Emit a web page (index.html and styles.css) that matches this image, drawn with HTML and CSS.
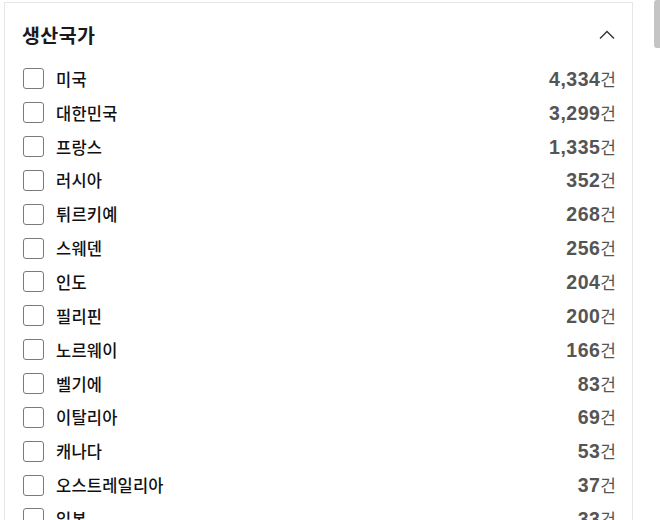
FILE: index.html
```html
<!DOCTYPE html>
<html lang="ko">
<head>
    <meta charset="UTF-8">
    <meta name="viewport" content="width=device-width, initial-scale=1.0">
    <title>생산국가 필터</title>
    <link rel="stylesheet" href="styles.css">
</head>
<body>

    <div class="filter-panel">
        <div class="filter-header">
            <h2>생산국가</h2>
            <svg class="chevron" width="16" height="10" viewBox="0 0 16 10">
                <polyline points="1,8.5 8,1.5 15,8.5" fill="none" stroke="#333" stroke-width="1.4"/>
            </svg>
        </div>

        <ul class="filter-list">
            <li class="filter-item"><label><input type="checkbox"><span class="name">미국</span></label><span class="count"><b>4,334</b>건</span></li>
            <li class="filter-item"><label><input type="checkbox"><span class="name">대한민국</span></label><span class="count"><b>3,299</b>건</span></li>
            <li class="filter-item"><label><input type="checkbox"><span class="name">프랑스</span></label><span class="count"><b>1,335</b>건</span></li>
            <li class="filter-item"><label><input type="checkbox"><span class="name">러시아</span></label><span class="count"><b>352</b>건</span></li>
            <li class="filter-item"><label><input type="checkbox"><span class="name">튀르키예</span></label><span class="count"><b>268</b>건</span></li>
            <li class="filter-item"><label><input type="checkbox"><span class="name">스웨덴</span></label><span class="count"><b>256</b>건</span></li>
            <li class="filter-item"><label><input type="checkbox"><span class="name">인도</span></label><span class="count"><b>204</b>건</span></li>
            <li class="filter-item"><label><input type="checkbox"><span class="name">필리핀</span></label><span class="count"><b>200</b>건</span></li>
            <li class="filter-item"><label><input type="checkbox"><span class="name">노르웨이</span></label><span class="count"><b>166</b>건</span></li>
            <li class="filter-item"><label><input type="checkbox"><span class="name">벨기에</span></label><span class="count"><b>83</b>건</span></li>
            <li class="filter-item"><label><input type="checkbox"><span class="name">이탈리아</span></label><span class="count"><b>69</b>건</span></li>
            <li class="filter-item"><label><input type="checkbox"><span class="name">캐나다</span></label><span class="count"><b>53</b>건</span></li>
            <li class="filter-item"><label><input type="checkbox"><span class="name">오스트레일리아</span></label><span class="count"><b>37</b>건</span></li>
            <li class="filter-item"><label><input type="checkbox"><span class="name">일본</span></label><span class="count"><b>33</b>건</span></li>
        </ul>
    </div>

    <div class="scroll-thumb"></div>

</body>
</html>
```

FILE: styles.css
```css
html, body {
    height: 100%;
    overflow: hidden;
}

body {
    margin: 0;
    padding: 0;
    background-color: #fff;
    font-family: "Noto Sans CJK KR", "Noto Sans", sans-serif;
    color: #111;
}

.filter-panel {
    margin: 2px 0 0 4px;
    width: 629px;
    border: 1px solid #e6e6e6;
    border-bottom: none;
    padding: 0 16px 0 17px;
    box-sizing: border-box;
}

.filter-header {
    display: flex;
    justify-content: space-between;
    align-items: center;
    padding: 19px 0 14px 0;
}

.filter-header h2 {
    margin: 0;
    font-size: 19.5px;
    line-height: 26px;
    font-weight: 700;
    letter-spacing: 0.4px;
    color: #1a1a1a;
}

.chevron {
    margin-right: 1px;
}

.filter-list {
    list-style: none;
    margin: 0;
    padding: 0;
}

.filter-item {
    display: flex;
    justify-content: space-between;
    align-items: center;
    height: 33.85px;
}

.filter-item label {
    display: flex;
    align-items: center;
    cursor: pointer;
}

.filter-item input {
    appearance: none;
    -webkit-appearance: none;
    width: 21px;
    height: 21px;
    margin: 0 12px 0 1px;
    border: 1.5px solid #7a7a7a;
    border-radius: 3px;
    background-color: #fff;
    box-sizing: border-box;
}

.name {
    font-size: 16.5px;
    line-height: 22px;
    font-weight: 500;
    letter-spacing: 0.2px;
    color: #111;
}

.count {
    font-size: 17px;
    line-height: 22px;
    color: #555;
}

.count b {
    font-family: "Liberation Sans", Arial, sans-serif;
    font-weight: 700;
    font-size: 19.5px;
    letter-spacing: 0.5px;
}

.scroll-thumb {
    position: absolute;
    top: 0;
    right: 0;
    width: 6px;
    height: 48px;
    background-color: #c4c4c4;
    border-radius: 3px 0 0 3px;
}
```
